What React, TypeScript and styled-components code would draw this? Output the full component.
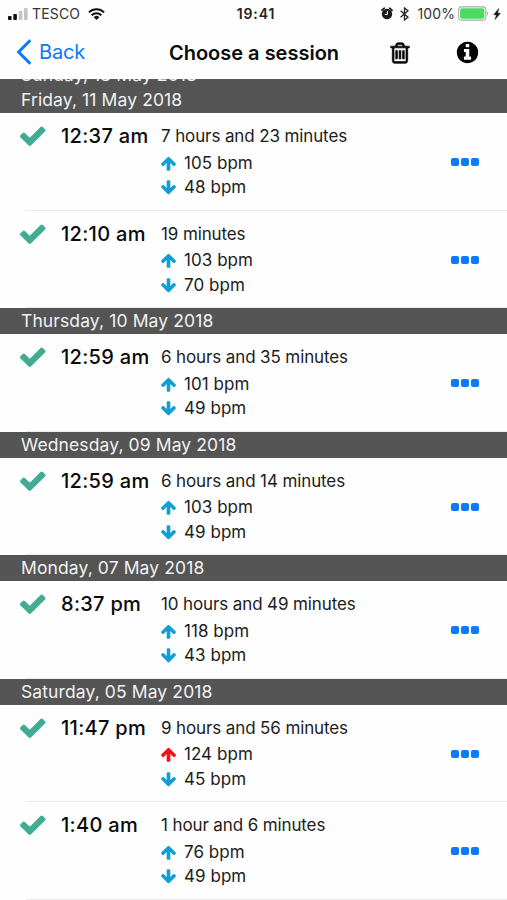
import React from "react";
import styled, { createGlobalStyle } from "styled-components";

const Global = createGlobalStyle`
  * { box-sizing: border-box; }
  html, body { margin: 0; background: #fff; }
  body { font-family: Inter, "Liberation Sans", sans-serif; color: #1c1c1c; }
`;

const Screen = styled.main`
  width: 507px;
  height: 900px;
  overflow: hidden;
  display: flex;
  flex-direction: column;
  background: #fefefe;
`;

const StatusBar = styled.div`
  flex: none;
  height: 27px;
  display: grid;
  grid-template-columns: 1fr auto 1fr;
  align-items: center;
`;

const StatusGroup = styled.div<{ $end?: boolean }>`
  display: flex;
  align-items: center;
  justify-content: ${(p) => (p.$end ? "flex-end" : "flex-start")};
  padding: ${(p) => (p.$end ? "0 6px 0 0" : "0 0 0 8px")};
  svg { flex: none; display: block; }
`;

const Carrier = styled.span`
  margin: 0 8px 0 4px;
  font-size: 14px;
  line-height: 27px;
  letter-spacing: 0.15px;
  color: #333;
`;

const Clock = styled.span`
  padding-left: 5px;
  font-size: 14px;
  line-height: 27px;
  font-weight: 600;
  letter-spacing: 0.85px;
  color: #222;
`;

const Percent = styled.span`
  margin: 0 3px 0 8px;
  font-size: 14px;
  line-height: 27px;
  letter-spacing: 0.1px;
  color: #333;
`;

const NavBar = styled.header`
  flex: none;
  height: 52px;
  padding-bottom: 1px;
  display: grid;
  grid-template-columns: 1fr auto 1fr;
  align-items: center;
`;

const BackButton = styled.button`
  display: flex;
  align-items: center;
  gap: 7px;
  padding: 0 0 1px 16px;
  border: 0;
  background: none;
  font: 400 20px/26px Inter, sans-serif;
  letter-spacing: -0.2px;
  color: #0a7aff;
  svg { display: block; }
`;

const Title = styled.h1`
  margin: 0;
  padding-left: 1px;
  font-size: 20px;
  line-height: 26px;
  font-weight: 600;
  letter-spacing: 0;
  color: #0b0b0b;
`;

const Actions = styled.div`
  display: flex;
  align-items: center;
  justify-content: flex-end;
  gap: 42.5px;
  padding-right: 27.5px;
`;

const IconButton = styled.button`
  display: flex;
  padding: 0;
  border: 0;
  background: none;
  color: #000;
`;

const List = styled.div`
  flex: 1;
  min-height: 0;
  overflow: hidden;
`;

const DayHeader = styled.h2`
  margin: 0;
  height: 26px;
  padding-left: 21px;
  background: #555;
  color: #f2f2f2;
  font-size: 17.5px;
  line-height: 26px;
  font-weight: 400;
  letter-spacing: 0.11px;
  white-space: nowrap;
`;

const LeavingHeader = styled(DayHeader)`
  height: 8px;
  display: flex;
  align-items: flex-end;
  overflow: hidden;
  line-height: 24px;
`;

const Row = styled.article`
  height: 97.5px;
  display: grid;
  grid-template-columns: 41px 100px 1fr 28px;
  padding: 10px 28px 0 20px;
  background: linear-gradient(#ebebeb, #ebebeb) 26px 100% / 100% 1px no-repeat;
`;

const CheckCell = styled.div`
  margin-top: -2px;
  height: 29px;
  color: #41ac92;
`;

const Time = styled.div`
  font-size: 20px;
  line-height: 26px;
  font-weight: 500;
  letter-spacing: 0.3px;
  color: #0b0b0b;
  white-space: nowrap;
`;

const Details = styled.div`
  padding-top: 1px;
  font-size: 17px;
  line-height: 25px;
  white-space: nowrap;
`;

const Duration = styled.div`
  height: 27px;
  letter-spacing: -0.12px;
`;

const Rate = styled.div<{ $alert?: boolean }>`
  display: flex;
  align-items: center;
  gap: 7px;
  height: 24.5px;
  letter-spacing: 0.05px;
  svg { color: ${(p) => (p.$alert ? "#fb0d14" : "#0f9fd4")}; margin-left: -1px; }
`;

const More = styled.button`
  align-self: start;
  margin-top: 35px;
  padding: 0;
  border: 0;
  background: none;
  display: flex;
  gap: 2px;
`;

const Dot = styled.span`
  width: 8px;
  height: 8px;
  border-radius: 2px;
  background: #0a7aff;
`;

const BluetoothIcon = styled.svg`
  margin-left: 7px;
`;

const BoltIcon = styled.svg`
  margin-left: 5px;
`;

const Glyph = styled.svg<{ $size: number; $dx?: number }>`
  display: block;
  flex: none;
  width: ${(p) => p.$size}px;
  height: ${(p) => p.$size}px;
  margin-left: ${(p) => p.$dx ?? 0}px;
  fill: currentColor;
`;

const paths = {
  check:
    "M1671 566q0 40-28 68l-724 724-136 136q-28 28-68 28t-68-28l-136-136-362-362q-28-28-28-68t28-68l136-136q28-28 68-28t68 28l294 295 656-657q28-28 68-28t68 28l136 136q28 28 28 68z",
  up: "M1675 971q0 51-37 90l-75 75q-38 38-91 38-54 0-90-38l-294-293v704q0 52-37.500 84.500t-90.500 32.500h-128q-53 0-90.500-32.500t-37.500-84.500v-704l-294 293q-36 38-90 38t-90-38l-75-75q-38-38-38-90 0-53 38-91l651-651q35-37 90-37 54 0 91 37l651 651q37 39 37 91z",
  down: "M1675 832q0 53-37 90l-651 652q-39 37-91 37-53 0-90-37l-651-652q-38-36-38-90 0-53 38-91l74-75q39-37 91-37 53 0 90 37l294 294v-704q0-52 38-90t90-38h128q52 0 90 38t38 90v704l294-294q37-37 90-37 52 0 91 37l75 75q37 39 37 91z",
  trash:
    "M704 736v576q0 14-9 23t-23 9h-64q-14 0-23-9t-9-23v-576q0-14 9-23t23-9h64q14 0 23 9t9 23zm256 0v576q0 14-9 23t-23 9h-64q-14 0-23-9t-9-23v-576q0-14 9-23t23-9h64q14 0 23 9t9 23zm256 0v576q0 14-9 23t-23 9h-64q-14 0-23-9t-9-23v-576q0-14 9-23t23-9h64q14 0 23 9t9 23zm128 724v-948h-896v948q0 22 7 40.500t14.500 27 10.500 8.500h832q3 0 10.500-8.500t14.500-27 7-40.500zm-672-1076h448l-48-117q-7-9-17-11h-317q-10 2-17 11zm928 32v64q0 14-9 23t-23 9h-96v948q0 83-47 143.500t-113 60.500h-832q-66 0-113-58.500t-47-141.500v-952h-96q-14 0-23-9t-9-23v-64q0-14 9-23t23-9h309l70-167q15-37 54-63t79-26h320q40 0 79 26t54 63l70 167h309q14 0 23 9t9 23z",
  info: "M1152 1376v-160q0-14-9-23t-23-9h-96v-512q0-14-9-23t-23-9h-320q-14 0-23 9t-9 23v160q0 14 9 23t23 9h96v320h-96q-14 0-23 9t-9 23v160q0 14 9 23t23 9h448q14 0 23-9t9-23zm-128-896v-160q0-14-9-23t-23-9h-192q-14 0-23 9t-9 23v160q0 14 9 23t23 9h192q14 0 23-9t9-23zm640 416q0 209-103 385.500t-279.500 279.500-385.500 103-385.500-103-279.500-279.500-103-385.500 103-385.500 279.500-279.500 385.500-103 385.500 103 279.500 279.500 103 385.500z",
};

function Icon({ name, size, dx, stroke }: { name: keyof typeof paths; size: number; dx?: number; stroke?: number }) {
  return (
    <Glyph $size={size} $dx={dx} viewBox="0 0 1792 1792" stroke="currentColor" strokeWidth={stroke ?? 0}>
      <path d={paths[name]} />
    </Glyph>
  );
}

type Session = { time: string; duration: string; high: number; low: number; alert?: boolean };

const days: { date: string; sessions: Session[] }[] = [
  {
    date: "Friday, 11 May 2018",
    sessions: [
      { time: "12:37 am", duration: "7 hours and 23 minutes", high: 105, low: 48 },
      { time: "12:10 am", duration: "19 minutes", high: 103, low: 70 },
    ],
  },
  {
    date: "Thursday, 10 May 2018",
    sessions: [{ time: "12:59 am", duration: "6 hours and 35 minutes", high: 101, low: 49 }],
  },
  {
    date: "Wednesday, 09 May 2018",
    sessions: [{ time: "12:59 am", duration: "6 hours and 14 minutes", high: 103, low: 49 }],
  },
  {
    date: "Monday, 07 May 2018",
    sessions: [{ time: "8:37 pm", duration: "10 hours and 49 minutes", high: 118, low: 43 }],
  },
  {
    date: "Saturday, 05 May 2018",
    sessions: [
      { time: "11:47 pm", duration: "9 hours and 56 minutes", high: 124, low: 45, alert: true },
      { time: "1:40 am", duration: "1 hour and 6 minutes", high: 76, low: 49 },
    ],
  },
];

function SessionRow({ s }: { s: Session }) {
  return (
    <Row>
      <CheckCell>
        <Icon name="check" size={29.5} dx={-2} />
      </CheckCell>
      <Time>{s.time}</Time>
      <Details>
        <Duration>{s.duration}</Duration>
        <Rate $alert={s.alert}>
          <Icon name="up" size={17} />
          {s.high} bpm
        </Rate>
        <Rate>
          <Icon name="down" size={17} />
          {s.low} bpm
        </Rate>
      </Details>
      <More aria-label="More">
        <Dot />
        <Dot />
        <Dot />
      </More>
    </Row>
  );
}

export default function App() {
  return (
    <>
      <Global />
      <Screen>
        <StatusBar>
          <StatusGroup>
            <svg width="20" height="12" viewBox="0 0 20 12">
              <rect x="0" y="8" width="3.600" height="4" rx="0.800" fill="#111" />
              <rect x="5.300" y="6" width="3.600" height="6" rx="0.800" fill="#111" />
              <rect x="10.700" y="3" width="3.600" height="9" rx="0.800" fill="#c4c4c4" />
              <rect x="16" y="0" width="3.600" height="12" rx="0.800" fill="#c4c4c4" />
            </svg>
            <Carrier>TESCO</Carrier>
            <svg width="17" height="12" viewBox="0 0 17 12" fill="none" stroke="#111" strokeWidth="2">
              <path d="M0.900 4.400a10.900 10.900 0 0 1 15.200 0" />
              <path d="M3.700 7.300a6.800 6.800 0 0 1 9.600 0" />
              <path d="M5.700 9.200a4 4 0 0 1 5.600 0L8.500 12z" fill="#111" stroke="none" />
            </svg>
          </StatusGroup>
          <Clock>19:41</Clock>
          <StatusGroup $end>
            <svg width="12" height="13" viewBox="0 0 12 13">
              <circle cx="6" cy="7" r="5.200" fill="#1a1a1a" />
              <path d="M0.900 3.300 3.300 1.200M11.100 3.300 8.700 1.200" stroke="#1a1a1a" strokeWidth="1.700" strokeLinecap="round" />
              <path d="M6.400 4v3.400H3.800" fill="none" stroke="#fff" strokeWidth="1" />
            </svg>
            <BluetoothIcon width="9" height="14" viewBox="0 0 9 14" fill="none" stroke="#222" strokeWidth="1.300">
              <path d="M0.600 3.800 8 10.200 4.500 13V1L8 3.800 0.600 10.200" />
            </BluetoothIcon>
            <Percent>100%</Percent>
            <svg width="30" height="15" viewBox="0 0 29 14">
              <rect x="0.600" y="0.600" width="26.300" height="12.800" rx="3" fill="#fff" stroke="#aaa" />
              <rect x="2" y="2" width="23.500" height="10" rx="1.800" fill="#4cd964" />
              <path d="M27.800 4.700q1.200 0.700 1.200 2.300t-1.200 2.300z" fill="#aaa" />
            </svg>
            <BoltIcon width="8" height="12" viewBox="0 0 8 12">
              <path d="M5.800 0.600 0.800 6.700h2.700L2 11.600 7.300 5.300H4.500z" fill="#111" stroke="#111" strokeWidth="0.500" />
            </BoltIcon>
          </StatusGroup>
        </StatusBar>
        <NavBar>
          <BackButton>
            <svg width="16" height="26" viewBox="0 0 16 26" fill="none" stroke="#0a7aff" strokeWidth="3">
              <path d="M14.300 1.300 2.600 13l11.700 11.700" />
            </svg>
            Back
          </BackButton>
          <Title>Choose a session</Title>
          <Actions>
            <IconButton aria-label="Delete">
              <Icon name="trash" size={24} stroke={50} />
            </IconButton>
            <IconButton aria-label="Info">
              <Icon name="info" size={25} />
            </IconButton>
          </Actions>
        </NavBar>
        <List>
          <LeavingHeader>Sunday, 13 May 2018</LeavingHeader>
          {days.map((d) => (
            <section key={d.date}>
              <DayHeader>{d.date}</DayHeader>
              {d.sessions.map((s) => (
                <SessionRow key={s.time} s={s} />
              ))}
            </section>
          ))}
        </List>
      </Screen>
    </>
  );
}
